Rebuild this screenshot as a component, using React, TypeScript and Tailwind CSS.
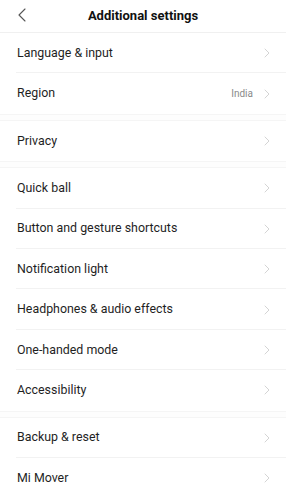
import { ChevronLeft, ChevronRight } from "lucide-react";

type Item = { label: string; value?: string };

const sections: Item[][] = [
  [{ label: "Language & input" }, { label: "Region", value: "India" }],
  [{ label: "Privacy" }],
  [
    { label: "Quick ball" },
    { label: "Button and gesture shortcuts" },
    { label: "Notification light" },
    { label: "Headphones & audio effects" },
    { label: "One-handed mode" },
    { label: "Accessibility" },
  ],
  [{ label: "Backup & reset" }, { label: "Mi Mover" }],
];

function Row({ item, last }: { item: Item; last: boolean }) {
  return (
    <div className="relative flex items-center h-[40.4px] pl-[17px] pr-[11px]">
      <span className="flex-1 text-[12.4px] text-[#1f1f1f]">{item.label}</span>
      {item.value && (
        <span className="text-[10px] text-[#8a8a8a] mr-[6px]">{item.value}</span>
      )}
      <ChevronRight size={16} strokeWidth={1.1} className="text-[#c4c4c4]" />
      {!last && (
        <div className="absolute bottom-0 left-[16px] right-0 h-px bg-[#f2f2f2]" />
      )}
    </div>
  );
}

export default function App() {
  return (
    <div
      className="w-[286px] h-[500px] bg-white overflow-hidden"
      style={{ fontFamily: "Roboto, 'Noto Sans', sans-serif" }}
    >
      {/* Header */}
      <div className="relative flex items-center justify-center h-[33px] border-b border-[#f0f0f0]">
        <ChevronLeft
          size={24}
          strokeWidth={1.1}
          className="absolute left-[10px] top-[3px] text-[#555]"
        />
        <h1 className="text-[13px] font-bold text-[#111]">Additional settings</h1>
      </div>

      {sections.map((section, si) => (
        <div key={si}>
          {si > 0 && <div className="h-[7px] border-y border-[#f5f5f5] bg-[#fdfdfd]" />}
          {section.map((item, i) => (
            <Row key={item.label} item={item} last={i === section.length - 1} />
          ))}
        </div>
      ))}
    </div>
  );
}
